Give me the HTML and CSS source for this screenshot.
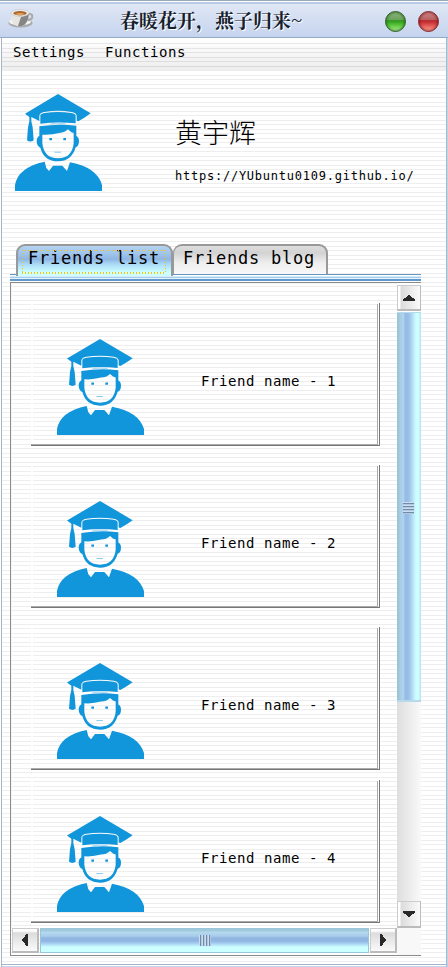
FILE: index.html
```html
<!DOCTYPE html>
<html lang="zh-CN">
<head>
<meta charset="utf-8">
<title>春暖花开&#xFF0C;燕子归来~</title>
<link rel="stylesheet" href="styles.css">
</head>
<body>
<svg class="defs" width="0" height="0">
  <symbol id="graduate" viewBox="45 42 261 291" preserveAspectRatio="none">
    <path fill="#1296db" d="M174 42L272 100L253 113L235 124L230 122V107Q228 98 215 96Q174 89 133 96Q120 98 118 107V123L94 111V124L98 142L101 181Q91 188 81 181L84 142L88 124V111L75 101Z"/>
    <path fill="#1296db" d="M121 106Q122 101 133 99Q174 93 215 99Q226 101 227 107V130Q174 124 121 131Z"/>
    <path fill="#b5dcf4" d="M151 130Q174 126 197 130V134Q174 131 151 134Z"/>
    <path fill="#1296db" fill-rule="evenodd" d="M118 139Q174 130 229 137V168Q237 172 237 183Q237 199 227 202Q215 244 174 244Q132 244 121 203Q111 199 110 184Q110 172 118 167ZM127 164Q152 166 177 159Q196 157 204 148L213 156L221 159V190Q216 235 174 235Q132 235 127 190Z"/>
    <path fill="#1296db" d="M148 174h8v7h-8zM190 174h8v7h-8z"/>
    <path fill="#87c9ee" d="M163 215h20v3h-20z"/>
    <path fill="#1296db" d="M45 333V315Q54 262 134 245L139 264L147 273L159 257H187L201 273L210 247Q291 262 306 315V333Z"/>
  </symbol>
</svg>
<div class="window">
  <header class="titlebar">
    <svg class="cup" width="26" height="20" viewBox="0 0 26 20">
      <ellipse cx="12.5" cy="14" rx="12" ry="4.5" fill="#a9a9a9"/>
      <ellipse cx="12" cy="12.7" rx="11" ry="3.7" fill="#f2f2ef"/>
      <path d="M19 5h3q3 0 2 4q-1 2-5 2" fill="none" stroke="#aaa" stroke-width="2"/>
      <path d="M3 3Q3 16 9 17H15Q21 14 21 3Z" fill="#e5e5e2"/>
      <path d="M13 8L21 5Q20 15 14 17H10Z" fill="#858585"/>
      <ellipse cx="12" cy="4" rx="9" ry="3.5" fill="#eee" stroke="#bbb" stroke-width=".5"/>
      <ellipse cx="12" cy="4.3" rx="6.8" ry="2.2" fill="#a8672f"/>
      <path d="M7 5Q12 3 17 5Q12 7 7 5" fill="#e7a45b"/>
    </svg>
    <h1>春暖花开&#xFF0C;燕子归来~</h1>
    <span class="orb green"></span>
    <span class="orb red"></span>
  </header>
  <nav class="menu"><span>Settings</span><span>Functions</span></nav>
  <section class="profile">
    <svg class="avatar"><use href="#graduate"/></svg>
    <div class="who"><div class="name">黄宇辉</div><div class="url">https://YUbuntu0109.github.io/</div></div>
  </section>
  <div class="tabs">
    <div class="tab active"><span>Friends list</span></div>
    <div class="tab"><span>Friends blog</span></div>
  </div>
  <div class="rule"></div>
  <main class="pane">
    <div class="list">
      <article class="card"><svg class="avatar"><use href="#graduate"/></svg><span>Friend name - 1</span></article>
      <article class="card"><svg class="avatar"><use href="#graduate"/></svg><span>Friend name - 2</span></article>
      <article class="card"><svg class="avatar"><use href="#graduate"/></svg><span>Friend name - 3</span></article>
      <article class="card last"><svg class="avatar"><use href="#graduate"/></svg><span>Friend name - 4</span></article>
    </div>
    <div class="vbar">
      <div class="btn"><svg width="12" height="6" viewBox="0 0 12 6"><path d="M5 0h2v1h1v1h1v1h2v1h1v2H0V4h1V3h2V2h1V1h1z"/></svg></div>
      <div class="thumb"><i class="grip"></i></div>
      <div class="track"></div>
      <div class="btn"><svg width="12" height="6" viewBox="0 0 12 6"><path d="M0 0h12v2h-1v1H9v1H8v1H7v1H5V5H4V4H3V3H1V2H0z"/></svg></div>
    </div>
    <div class="hbar">
      <div class="btn"><svg width="6" height="12" viewBox="0 0 6 12"><path d="M6 0v12H4v-1H3V9H2V8H1V7H0V5h1V4h1V3h1V1h1V0z"/></svg></div>
      <div class="thumb"><i class="grip"></i></div>
      <div class="btn"><svg width="6" height="12" viewBox="0 0 6 12"><path d="M0 0v12h2v-1h1V9h1V8h1V7h1V5H5V4H4V3H3V1H2V0z"/></svg></div>
    </div>
    <div class="corner"></div>
  </main>
</div>
</body>
</html>
```
FILE: styles.css
```css
* { box-sizing: border-box; }
body {
  margin: 0;
  width: 448px;
  height: 967px;
  overflow: hidden;
  color: #000;
  font-family: "DejaVu Sans Mono", "Noto Sans CJK SC", monospace;
  background: #fff;
}
.defs { position: absolute; }
.window {
  height: 967px;
  display: flex;
  flex-direction: column;
  background:
    linear-gradient(90deg, #fff 0 1px, #a7b4c3 1px 2px, transparent 2px 446px, #a5b9d1 446px 447px, #c3d4ea 447px),
    linear-gradient(transparent 964px, #a7b5c5 964px 965px, #fff 965px 966px, #c3d5ef 966px),
    repeating-linear-gradient(#fff 0 3px, #eee 3px 4px, #fff 4px 7px, #eee 7px 8px, #fff 8px 9px);
}
.titlebar {
  height: 38px;
  flex: none;
  display: flex;
  align-items: center;
  padding: 3px 9px 0 8px;
  border-top: 1px solid #98a9ba;
  border-bottom: 1px solid #92a9c8;
  background: linear-gradient(#fff 0 1px, #b8cae4 1px 3px, #e0e7f5 3px, #c5d4ee);
}
.cup { margin-top: -4px; }
.titlebar h1 {
  flex: 1;
  margin: -1px 0 0 86px;
  font: bold 19px/30px "Noto Serif CJK SC", "Noto Sans CJK SC", sans-serif;
  white-space: nowrap;
  color: #15202c;
  text-shadow: 1px 1px #fff;
}
.orb { width: 21px; height: 21px; border-radius: 50%; margin-top: 1px; }
.green { margin-right: 12px; border: 1px solid #255a18; background: linear-gradient(#8fb581 0, #6ba35a 40%, #2b981b 46%, #5bc63b 70%, #b5f29b); box-shadow: inset 0 0 3px #1c5d10; }
.red { border: 1px solid #801d20; background: linear-gradient(#cf8b8b 0, #b96061 40%, #ba2427 46%, #e25453 70%, #ffae99); box-shadow: inset 0 0 3px #7a0b0e; }
.menu {
  height: 33px;
  flex: none;
  margin: 0 2px;
  padding: 4px 0 0 11px;
  display: flex;
  gap: 20px;
  font-size: 14px;
  line-height: 20px;
  letter-spacing: .57px;
  background:
    linear-gradient(transparent 5px, #e7e7e7 5px 6px, transparent 6px 10px, #e5e5e5 10px 11px, transparent 11px 14px, #e2e2e2 14px 15px, transparent 15px 19px, #dfdfdf 19px 20px, transparent 20px 23px, #ddd 23px 24px, transparent 24px 28px, #d9d9d9 28px 29px, transparent 29px),
    linear-gradient(#fff, #ededed);
}
.profile { height: 173px; flex: none; display: flex; padding: 23px 0 0 15px; }
.avatar { width: 87px; height: 97px; flex: none; display: block; }
.who { margin-left: 73px; }
.name { margin-top: 18px; font: 300 27px/40px "Noto Sans CJK SC", sans-serif; }
.url { margin-top: 15px; font-size: 12px; line-height: 18px; letter-spacing: .76px; }
.tabs { height: 30px; flex: none; display: flex; padding-left: 17px; position: relative; }
.tab {
  width: 155px;
  height: 30px;
  border: 1px solid #999;
  border-width: 2px 2px 0 1px;
  border-radius: 9px 9px 0 0;
  background: linear-gradient(#ddd, #d3d3d3 25%, #eee 60%, #f8f8f8);
  padding: 0 0 0 9px;
  font-size: 17px;
  line-height: 25px;
  letter-spacing: .77px;
  white-space: nowrap;
}
.tab.active {
  width: 157px;
  height: 32px;
  margin-left: -1px;
  padding-left: 10px;
  line-height: 24px;
  position: relative;
  border-left-width: 2px;
  background: linear-gradient(#b6d3f0, #9fc5ec 25%, #8fb6e3 44%, #a9daf7 60%, #cff 88%);
}
.tab.active::after {
  content: "";
  position: absolute;
  left: 4px; top: 4px;
  width: 144px; height: 24px;
  --d: #ffc000 0 1px, transparent 1px 3px;
  background:
    repeating-linear-gradient(90deg, var(--d)) 0 0 / 100% 1px no-repeat,
    repeating-linear-gradient(90deg, var(--d)) 0 100% / 100% 2px no-repeat,
    repeating-linear-gradient(var(--d)) 0 0 / 1px 100% no-repeat,
    repeating-linear-gradient(var(--d)) 100% 0 / 1px 100% no-repeat;
}
.rule {
  height: 8px;
  flex: none;
  width: 411px;
  margin-left: 10px;
  background: linear-gradient(#6796c3 0 1px, #fff 1px 2px, #d5ecfc 2px 3px, #a4ccec 3px 4px, #e4f3ff 4px 5px, #6299cb 5px 7px, #fff 7px);
}
.pane {
  width: 411px;
  height: 674px;
  flex: none;
  margin-left: 10px;
  display: grid;
  grid-template-columns: 386px 24px;
  grid-template-rows: 645px 27px;
  border: 1px solid #8b8b8b;
  border-right: 0;
}
.list { padding: 20px 0 0 20px; overflow: hidden; box-shadow: inset 1px 1px #f5f5f5; }
.card {
  width: 349px;
  height: 143px;
  margin-bottom: 19px;
  padding: 36px 0 0 26px;
  display: flex;
  background:
    linear-gradient(#aaa, #aaa) 0 141px / 347px 1px no-repeat,
    linear-gradient(#777, #777) 0 142px / 349px 1px no-repeat,
    linear-gradient(#777, #777) 348px 0 / 1px 143px no-repeat,
    linear-gradient(#aaa, #aaa) 346px 1px / 1px 140px no-repeat,
    linear-gradient(#fff, #fff) 347px 0 / 1px 141px no-repeat,
    linear-gradient(#fff, #fff) 0 0 / 2px 141px no-repeat;
}
.card .avatar { height: 96px; }
.card:nth-child(3) { margin-bottom: 10px; }
.card span { margin: 32px 0 0 57px; font-size: 14px; line-height: 20px; letter-spacing: .57px; white-space: nowrap; }
.vbar { display: flex; flex-direction: column; padding-top: 2px; }
.hbar { display: flex; padding: 0 0 2px 1px; }
.btn {
  flex: none;
  display: flex;
  align-items: center;
  justify-content: center;
  fill: #292929;
  border: 1px solid #ccc;
  border-right: 2px solid #bbb;
  border-bottom: 2px solid #bbb;
}
.vbar .btn { width: 24px; height: 26px; background: linear-gradient(90deg, #fff 0 2px, #dcdcdc 3px, #fafafa); border-right-width: 1px; }
.vbar .btn:last-child { height: 27px; }
.hbar .btn { width: 27px; height: 25px; background: linear-gradient(#fff 0 2px, #dcdcdc 4px, #fafafa); }
.thumb { display: flex; align-items: center; justify-content: center; }
.vbar .thumb {
  height: 390px;
  margin-top: 1px;
  padding: 3px 2px 0 0;
  flex: none;
  border: 1px solid #b6d9eb;
  border-width: 1px 0 2px;
  background: linear-gradient(90deg, #9dc5d2 0 2px, #a8cee8 3px 5px, #b7d8f4 6px, #97bce6 8px 11px, #abd0f2 14px, #bfecfb 17px, #cff 19px 22px, #bde5f5 23px);
}
.hbar .thumb {
  flex: 1;
  margin: 0 1px;
  border: 1px solid #9cc5dc;
  background: linear-gradient(#a1c9dc 0 2px, #b5daef 3px, #a8cdeb 7px, #91b6e2 9px 12px, #abd6f5 15px, #cff 18px 23px);
}
.vbar .grip { width: 11px; height: 12px; background: repeating-linear-gradient(#cbdff0 0 1px, #728ba7 1px 2px, #afc9e3 2px 3px); }
.hbar .grip { width: 12px; height: 11px; background: repeating-linear-gradient(90deg, #cbdff0 0 1px, #728ba7 1px 2px, #afc9e3 2px 3px); }
.track { flex: 1; background: linear-gradient(90deg, #dedede, #f9f9f9); }
.corner { background: #f8f8f8; }
```
